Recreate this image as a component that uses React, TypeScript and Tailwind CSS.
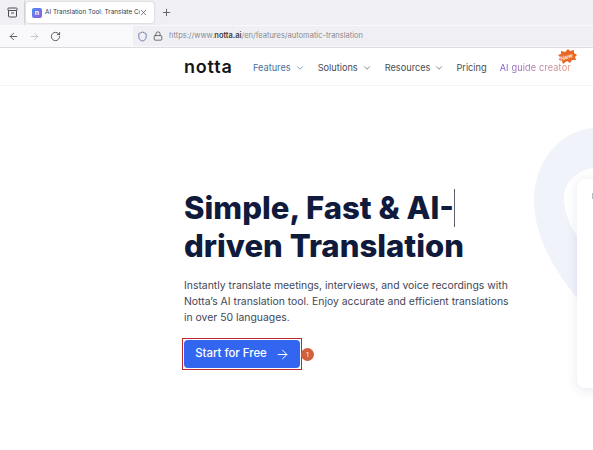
import { ArrowLeft, ArrowRight, ChevronDown, Lock, Plus, RotateCw, Shield, X } from "lucide-react";

function NavItem({ label, active }: { label: string; active?: boolean }) {
  return (
    <div className={`flex items-center gap-[4px] ${active ? "text-[#4a7099]" : "text-[#474d57]"}`}>
      <span>{label}</span>
      <ChevronDown size={10} strokeWidth={1.6} />
    </div>
  );
}

export default function App() {
  return (
    <div className="relative w-[593px] h-[450px] overflow-hidden bg-white font-['Inter',sans-serif]">
      {/* Tab strip */}
      <div className="flex h-[25px] items-end bg-[#f0f0f4]">
        <div className="flex h-[25px] w-[25px] items-center justify-center border-r border-[#d4d4da]">
          <svg width="11" height="11" viewBox="0 0 11 11" fill="none" stroke="#4a4a52" strokeWidth="1">
            <rect x="1" y="1" width="9" height="2.5" rx="0.6" />
            <path d="M1.5 3.5V9a1 1 0 0 0 1 1h6a1 1 0 0 0 1-1V3.5M4 6h3" />
          </svg>
        </div>
        <div className="ml-[1px] mb-[2px] flex h-[21px] w-[128px] items-center rounded-[3px] bg-white pl-[6px] shadow-[0_0_2px_rgba(0,0,0,0.25)]">
          <div className="flex h-[10px] w-[10px] items-center justify-center rounded-[2px] bg-gradient-to-br from-[#3f8af0] to-[#8a5fd8] text-[7px] font-bold leading-none text-white">
            n
          </div>
          <span className="ml-[3px] w-[95px] overflow-hidden whitespace-nowrap text-[6.4px] text-[#3a3a42]">AI Translation Tool: Translate Co</span>
          <X size={9} className="ml-[-1px] text-[#55555c]" />
        </div>
        <div className="ml-[7px] mb-[7px]">
          <Plus size={11} className="text-[#5a5a62]" />
        </div>
      </div>
      {/* Toolbar */}
      <div className="flex h-[23px] items-center border-b border-[#dcdce0] bg-[#f9f9fb]">
        <ArrowLeft size={11} className="ml-[8px] text-[#4f4f56]" />
        <ArrowRight size={11} className="ml-[10px] text-[#c0c0c6]" />
        <RotateCw size={11} className="ml-[10px] text-[#4f4f56]" />
        <div className="ml-[72px] flex h-[20px] flex-1 items-center bg-[#f0f0f4] pl-[4px]">
          <Shield size={11} className="text-[#6a72a8]" />
          <Lock size={10} className="ml-[5px] text-[#55555c]" />
          <span className="ml-[6px] whitespace-nowrap text-[7.5px] text-[#8a8a90]">
            https://www.<span className="font-semibold text-[#3a3a42]">notta.ai</span>/en/features/automatic-translation
          </span>
        </div>
      </div>
      {/* Site nav */}
      <div className="relative flex h-[38px] items-center border-b border-[#f4f4f6] pl-[184px] text-[9.2px]">
        <span className="mr-[21px] w-[48px] text-[18px] font-semibold leading-none tracking-[0.8px] text-[#14141a]">notta</span>
        <div className="mt-[3px] flex items-center gap-[13px]">
          <NavItem label="Features" active />
          <NavItem label="Solutions" />
          <NavItem label="Resources" />
          <span className="ml-[-1px] text-[#474d57]">Pricing</span>
          <span className="whitespace-nowrap bg-gradient-to-r from-[#7d5cc4] to-[#e8957a] bg-clip-text tracking-[0.12px] text-transparent">AI guide creator</span>
        </div>
        <div className="absolute left-[557px] top-[1px] flex h-[15px] w-[20px] items-center justify-center">
          <svg className="absolute inset-0" width="20" height="15" viewBox="0 0 20 15">
            <polygon points="1,6 4,5 4,2 8,3 11,0 13,2 17,1 17,4 20,6 18,8 19,11 15,11 13,14 10,12 6,15 5,12 2,11 3,8" fill="#e8682a" />
          </svg>
          <span className="relative rotate-[-18deg] text-[6px] font-semibold leading-none text-[#ffe9dc]">New</span>
        </div>
      </div>
      {/* Decoration */}
      <svg className="absolute left-[530px] top-[125px]" width="63" height="180" viewBox="0 0 63 180" fill="none">
        <path d="M63 3C30 6 4 36 4 76c0 36 22 72 44 98l15 2v-48C44 112 34 92 34 72c0-14 12-26 29-29Z" fill="#f1f3fb" />
      </svg>
      <div className="absolute left-[577px] top-[179px] h-[209px] w-[40px] rounded-[8px] bg-white shadow-[0_2px_12px_rgba(60,70,120,0.12)]">
        <div className="ml-[15px] mt-[14px] h-[6px] w-[2px] bg-[#b8bcc4]" />
      </div>
      {/* Hero */}
      <div className="relative pl-[184px] pt-[103px]">
        <h1 className="w-[300px] text-[31.1px] font-extrabold leading-[38px] text-[#101a3c]">
          <span className="border-r border-[#5a6070]">Simple, Fast &amp; AI-</span>
          <br />
          driven Translation
        </h1>
        <p className="mt-[13px] w-[328px] text-[10.4px] leading-[16px] text-[#3f4656]">
          Instantly translate meetings, interviews, and voice recordings with Notta’s AI translation tool. Enjoy accurate and efficient translations in over 50 languages.
        </p>
        <div className="relative ml-[-2px] mt-[12px] flex items-center">
          <div className="border border-[#c0282e] p-[1px]">
            <div className="flex h-[28px] w-[116px] items-center justify-center gap-[8px] rounded-[4px] bg-[#3366f0] pl-[1px] text-[11.4px] font-medium text-white">
              <span>Start for Free</span>
              <ArrowRight size={15} strokeWidth={1.6} />
            </div>
          </div>
          <div className="ml-[-1px] flex h-[13px] w-[13px] items-center justify-center rounded-full bg-[#d2603f] text-[6px] text-white">1</div>
        </div>
      </div>
    </div>
  );
}
